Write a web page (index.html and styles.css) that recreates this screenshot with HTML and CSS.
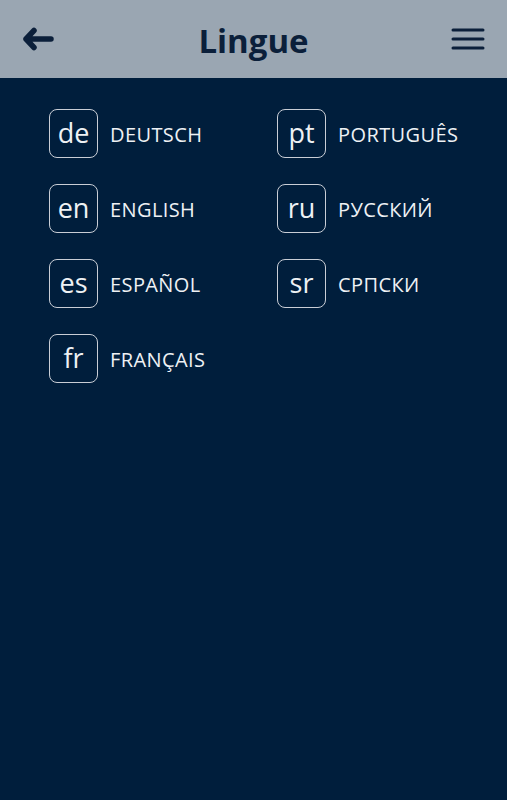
FILE: index.html
```html
<!DOCTYPE html>
<html lang="en">
<head>
    <meta charset="UTF-8">
    <meta name="viewport" content="width=device-width, initial-scale=1.0">
    <title>Lingue</title>
    <link rel="stylesheet" href="styles.css">
</head>
<body>

    <header class="top-bar">
        <button class="icon-btn" aria-label="Back">
            <svg width="36" height="24" viewBox="0 0 36 24">
                <path d="M31 12 H6 M14 3.5 L6 12 L14 20.5" fill="none" stroke="#0b1f3a" stroke-width="5.5" stroke-linecap="round" stroke-linejoin="round"/>
            </svg>
        </button>
        <h1>Lingue</h1>
        <button class="icon-btn" aria-label="Menu">
            <svg width="34" height="24" viewBox="0 0 34 24">
                <path d="M2 3 H32 M2 12 H32 M2 21 H32" fill="none" stroke="#0b1f3a" stroke-width="3" stroke-linecap="round"/>
            </svg>
        </button>
    </header>

    <main class="languages">
        <ul class="lang-column">
            <li class="lang"><span class="code">de</span><span class="name">DEUTSCH</span></li>
            <li class="lang"><span class="code">en</span><span class="name">ENGLISH</span></li>
            <li class="lang"><span class="code">es</span><span class="name">ESPAÑOL</span></li>
            <li class="lang"><span class="code">fr</span><span class="name">FRANÇAIS</span></li>
        </ul>
        <ul class="lang-column">
            <li class="lang"><span class="code">pt</span><span class="name">PORTUGUÊS</span></li>
            <li class="lang"><span class="code">ru</span><span class="name">РУССКИЙ</span></li>
            <li class="lang"><span class="code">sr</span><span class="name">СРПСКИ</span></li>
        </ul>
    </main>

</body>
</html>
```

FILE: styles.css
```css
body {
    font-family: "Open Sans", sans-serif;
    background-color: #001e3c;
    margin: 0;
    padding: 0;
    min-height: 100vh;
}

.top-bar {
    height: 78px;
    background-color: #9aa6b2;
    display: flex;
    align-items: center;
    justify-content: space-between;
    padding: 0 22px 0 20px;
    box-sizing: border-box;
}

.top-bar h1 {
    margin: 0;
    font-size: 33px;
    font-weight: bold;
    color: #0b1f3a;
    line-height: 1;
    padding-top: 3px;
}

.icon-btn {
    background: none;
    border: none;
    padding: 0;
    display: flex;
    cursor: pointer;
}

.languages {
    display: flex;
    padding: 31px 0 0 49px;
}

.lang-column {
    list-style: none;
    margin: 0;
    padding: 0;
    width: 228px;
    display: flex;
    flex-direction: column;
    gap: 26px;
}

.lang {
    display: flex;
    align-items: center;
    gap: 12px;
    color: #eef1f4;
}

.code {
    width: 49px;
    height: 49px;
    box-sizing: border-box;
    border: 1.5px solid #c9ced6;
    border-radius: 8px;
    display: flex;
    align-items: center;
    justify-content: center;
    font-size: 27px;
    line-height: 1;
    padding-bottom: 3px;
}

.name {
    font-size: 20px;
    letter-spacing: 0.4px;
    padding-top: 1px;
}
```
